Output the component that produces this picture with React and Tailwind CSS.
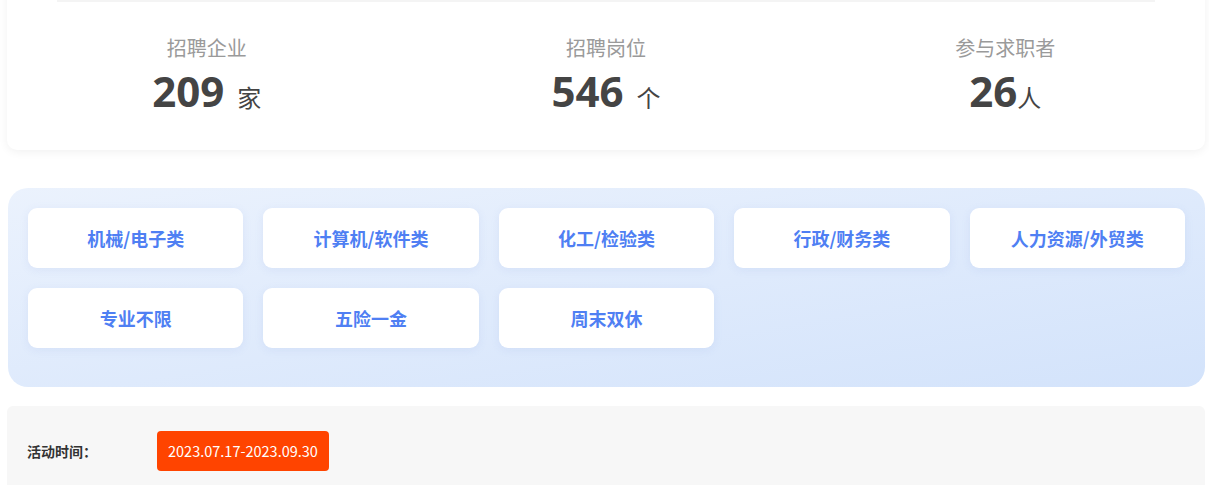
export default function App() {
  const stats = [
    { label: "招聘企业", num: "209", unit: "家", space: true },
    { label: "招聘岗位", num: "546", unit: "个", space: true },
    { label: "参与求职者", num: "26", unit: "人", space: false },
  ];
  const cats = [
    "机械/电子类",
    "计算机/软件类",
    "化工/检验类",
    "行政/财务类",
    "人力资源/外贸类",
    "专业不限",
    "五险一金",
    "周末双休",
  ];
  const font = { fontFamily: '"Noto Sans CJK SC", sans-serif' };
  return (
    <div className="w-[1209px] h-[485px] overflow-hidden bg-white" style={font}>
      <div className="mx-[7px] w-[1198px] -mt-[20px] pt-[20px] rounded-[10px] bg-white shadow-[0_2px_10px_rgba(0,0,0,0.06)] h-[170px]">
        <div className="mx-[50px] h-[2px] bg-[#f4f4f4]" />
        <div className="flex pt-[33px]">
          {stats.map((s) => (
            <div key={s.label} className="flex-1 flex flex-col items-center">
              <div className="text-[20px] leading-[26px] text-[#9a9a9a]">{s.label}</div>
              <div className="flex items-baseline mt-[4px] text-[#444]">
                <span
                  className="text-[42px] leading-[52px] font-bold"
                  style={{ fontFamily: '"Open Sans", sans-serif' }}
                >
                  {s.num}
                </span>
                <span className={"text-[24px] " + (s.space ? "ml-[13px]" : "ml-0")}>{s.unit}</span>
              </div>
            </div>
          ))}
        </div>
      </div>

      <div className="mx-[8px] mt-[38px] w-[1197px] h-[199px] rounded-[20px] bg-gradient-to-br from-[#ebf2fd] to-[#d3e3fb] pt-[20px] px-[20px]">
        <div className="grid grid-cols-5 gap-x-[20px] gap-y-[20px] w-[1157px]">
          {cats.map((c) => (
            <div
              key={c}
              className="h-[60px] rounded-[9px] bg-white flex items-center justify-center text-[18px] font-bold text-[#4f7ff3] shadow-[0_2px_8px_rgba(120,150,210,0.12)]"
            >
              {c}
            </div>
          ))}
        </div>
      </div>

      <div className="mx-[7px] mt-[19px] w-[1198px] h-[90px] rounded-[6px] bg-[#f7f7f7] flex items-start pt-[25px] pl-[20px]">
        <div className="w-[130px] h-[40px] flex items-center text-[14px] font-bold text-[#333]">活动时间：</div>
        <div className="h-[40px] px-[11px] rounded-[4px] bg-[#ff4400] text-white text-[14.5px] flex items-center">
          2023.07.17-2023.09.30
        </div>
      </div>
    </div>
  );
}
